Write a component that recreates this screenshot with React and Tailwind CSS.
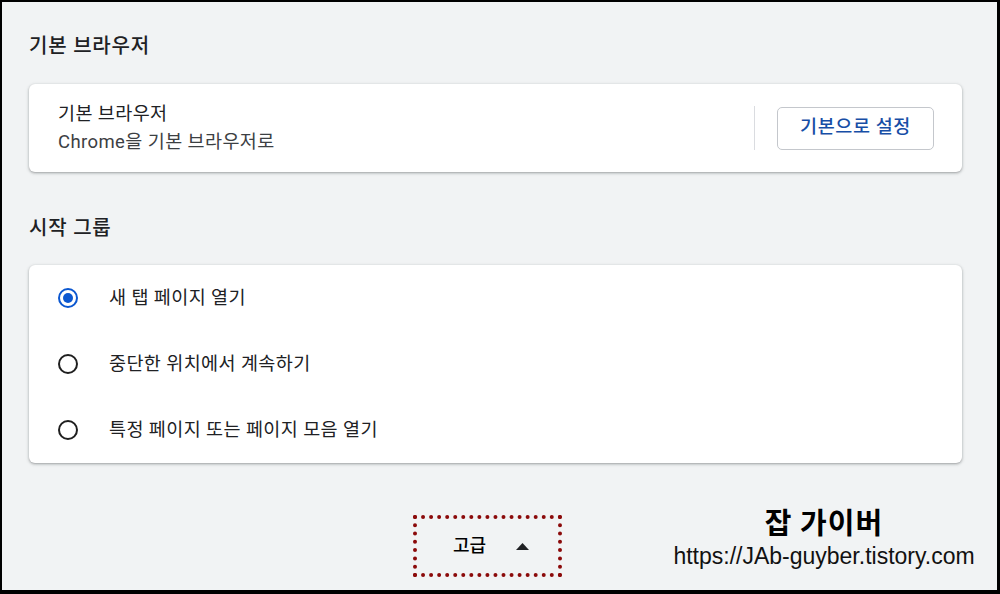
import React, { useState } from 'react'

const options = [
  { id: 'ntp', label: '새 탭 페이지 열기' },
  { id: 'continue', label: '중단한 위치에서 계속하기' },
  { id: 'specific', label: '특정 페이지 또는 페이지 모음 열기' },
]

function Radio({ checked }) {
  return (
    <span
      className={
        'flex h-[20px] w-[20px] shrink-0 items-center justify-center rounded-full border-[2.5px] ' +
        (checked ? 'border-[#0b57d0]' : 'border-[#1f1f1f]')
      }
    >
      {checked && <span className="h-[10px] w-[10px] rounded-full bg-[#0b57d0]" />}
    </span>
  )
}

export default function App() {
  const [startup, setStartup] = useState('ntp')

  return (
    <div
      className="relative h-[594px] w-[1000px] overflow-hidden border-t-2 border-l-2 border-r-[3px] border-b-4 border-black bg-[#f1f3f4] text-[#202124]"
      style={{ fontFamily: 'Roboto, "Noto Sans CJK KR", sans-serif' }}
    >
      <div className="w-[960px] pl-[27px] pt-[32px]">
        <h2 className="text-[20px] leading-[24px] font-medium tracking-[0.8px]">기본 브라우저</h2>

        <div className="mt-[26px] flex h-[88px] w-[933px] items-center rounded-[6px] bg-white pl-[29px] pr-[28px] shadow-[0_1px_2px_rgba(60,64,67,0.3),0_1px_3px_1px_rgba(60,64,67,0.15)]">
          <div className="flex-1 text-[18.5px] leading-[24px] tracking-[0.4px]">
            <div>기본 브라우저</div>
            <div className="mt-[4px] text-[#3c4043]">Chrome을 기본 브라우저로</div>
          </div>
          <div className="h-[44px] w-px bg-[#dadce0]" />
          <button className="ml-[22px] h-[43px] w-[157px] rounded-[5px] border border-[#c4c7cc] bg-white text-[18.5px] font-medium tracking-[0.6px] text-[#174ea6]">
            기본으로 설정
          </button>
        </div>

        <h2 className="mt-[44px] text-[20px] leading-[24px] font-medium tracking-[0.8px]">시작 그룹</h2>

        <div className="mt-[25px] w-[933px] rounded-[6px] bg-white shadow-[0_1px_2px_rgba(60,64,67,0.3),0_1px_3px_1px_rgba(60,64,67,0.15)]">
          {options.map(o => (
            <label
              key={o.id}
              onClick={() => setStartup(o.id)}
              className="flex h-[66px] cursor-pointer items-center pl-[29px]"
            >
              <Radio checked={startup === o.id} />
              <span className="ml-[31px] text-[18.5px] leading-[24px] tracking-[0.4px]">{o.label}</span>
            </label>
          ))}
        </div>

        <div className="ml-[384px] mt-[52px] flex h-[62px] w-[149px] items-center border-4 border-dotted border-[#8b0a0a] pl-[36px]">
          <span className="text-[18px] leading-[24px] font-medium text-black">고급</span>
          <svg className="ml-[30px]" width="13" height="7" viewBox="0 0 13 7">
            <path d="M0 7 L6.5 0 L13 7 Z" fill="#202124" />
          </svg>
        </div>
      </div>

      <div className="absolute left-[671px] top-[503px] w-[302px] text-center">
        <div className="text-[29px] leading-[32px] font-bold tracking-[1px] text-black" style={{ fontFamily: '"Noto Sans CJK KR", sans-serif' }}>
          잡 가이버
        </div>
        <div className="mt-[6px] text-[23px] leading-[26px] text-[#111]" style={{ fontFamily: '"Liberation Sans", Arial, sans-serif' }}>
          https://JAb-guyber.tistory.com
        </div>
      </div>
    </div>
  )
}
